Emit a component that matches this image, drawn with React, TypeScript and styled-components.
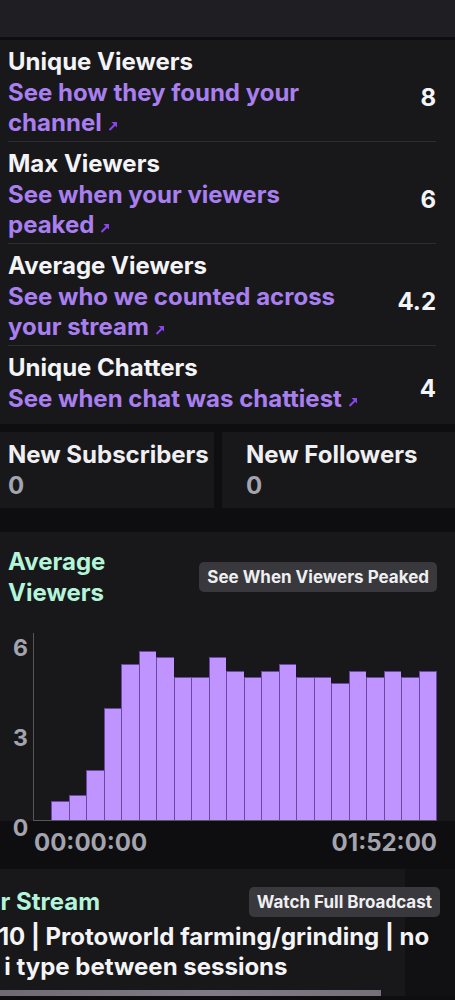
import styled, { createGlobalStyle } from 'styled-components'

const GlobalStyle = createGlobalStyle`
  body {
    margin: 0;
    background: #0e0e10;
    font-family: Inter, Roboto, "Liberation Sans", sans-serif;
    font-weight: 700;
    color: #efeff1;
    overflow-x: hidden;
  }
`

const TopBar = styled.div`
  height: 37px;
  background: #1f1f23;
`

const StatsCard = styled.section`
  margin-top: 3px;
  padding: 0 19px 7px 8px;
  background: #18181b;
`

const StatRow = styled.div`
  display: flex;
  align-items: center;
  padding: 6px 0 3px;

  & + & {
    border-top: 1px solid #2c2c31;
  }
`

const StatText = styled.div`
  flex: 1;
  min-width: 0;
`

const StatTitle = styled.div`
  font-size: 24px;
  line-height: 32px;
  color: #f4f4f6;
`

const StatLink = styled.a`
  display: block;
  font-size: 24px;
  line-height: 30px;
  color: #a97ff0;
  text-decoration: none;
`

const ArrowIcon = styled.svg`
  width: 10px;
  height: 10px;
  margin-left: 6px;
  vertical-align: baseline;
`

const StatValue = styled.div`
  min-width: 60px;
  margin-left: 16px;
  padding-top: 10px;
  text-align: right;
  font-size: 24px;
  color: #f4f4f6;
`

const SubsRow = styled.div`
  display: grid;
  grid-template-columns: 214px 1fr;
  gap: 8px;
  margin-top: 8px;
`

const SubsCard = styled.div<{ $inset: number }>`
  padding: 7px 8px 7px ${(p) => p.$inset}px;
  background: #18181b;
`

const SubsTitle = styled.div`
  font-size: 24px;
  line-height: 32px;
  white-space: nowrap;
`

const SubsValue = styled.div`
  font-size: 24px;
  line-height: 30px;
  color: #a4a4ae;
`

const ChartCard = styled.section`
  margin-top: 24px;
  padding: 14px 18px 0 8px;
  background: #18181b;
`

const CardHeader = styled.div`
  display: flex;
  align-items: center;
  justify-content: space-between;
`

const SectionTitle = styled.h2<{ $narrow?: boolean }>`
  margin: 0;
  max-width: ${(p) => (p.$narrow ? '140px' : 'none')};
  font-size: 24px;
  line-height: 31px;
  color: #b4f5da;
  white-space: ${(p) => (p.$narrow ? 'normal' : 'nowrap')};
`

const PillButton = styled.button`
  flex-shrink: 0;
  height: 30px;
  padding: 0 8px;
  border: none;
  border-radius: 5px;
  background: #38383d;
  color: #efeff1;
  font-family: inherit;
  font-weight: 700;
  font-size: 17px;
`

const PlotRow = styled.div`
  display: flex;
  align-items: flex-start;
  margin-top: 25px;
`

const YAxis = styled.div`
  display: flex;
  flex-direction: column;
  justify-content: space-between;
  width: 25px;
  height: 210px;
  margin-bottom: -23px;
  text-align: center;
  font-size: 23px;
  line-height: 30px;
  color: #a4a4ae;
`

const Bars = styled.div`
  flex: 1;
  display: flex;
  align-items: flex-end;
  height: 187px;
  border-left: 1px solid #55555c;
  border-bottom: 1px solid #55555c;
`

const Bar = styled.div`
  flex: 1;
  box-sizing: border-box;
  background: #bf94ff;
  border: 1px solid #6b47a6;
  border-bottom: none;
  border-right: none;

  &:last-child {
    border-right: 1px solid #6b47a6;
  }
`

const XLabels = styled.div`
  display: flex;
  justify-content: space-between;
  padding: 7px 18px 0 34px;
  font-size: 24px;
  line-height: 30px;
  color: #a4a4ae;
`

const StreamSection = styled.section`
  margin-top: 11px;
  padding-top: 17px;
  overflow: hidden;
  background: linear-gradient(90deg, #18181b 405px, #111113 405px);
`

const StreamInner = styled.div`
  margin-left: -44px;
  padding-right: 15px;
`

const StreamTitle = styled.div`
  max-width: 485px;
  margin-top: 5px;
  font-size: 24px;
  line-height: 30px;
  color: #f4f4f6;
`

const Thumb = styled.div`
  width: 425px;
  height: 6px;
  margin-top: 8px;
  background: linear-gradient(90deg, #6c6670, #807a86 60%, #75707a);
`

function Arrow() {
  return (
    <ArrowIcon viewBox="0 0 10 10">
      <path d="M1.5 9 L7 3.5" stroke="#8b45f0" strokeWidth="2" />
      <polygon points="3.5,1 9,1 9,6.5" fill="#8b45f0" />
    </ArrowIcon>
  )
}

const stats = [
  { title: 'Unique Viewers', link: 'See how they found your channel', value: '8' },
  { title: 'Max Viewers', link: 'See when your viewers peaked', value: '6' },
  { title: 'Average Viewers', link: 'See who we counted across your stream', value: '4.2' },
  { title: 'Unique Chatters', link: 'See when chat was chattiest', value: '4' },
]

const viewers = [
  0, 0.66, 0.87, 1.74, 3.9, 5.42, 5.86, 5.65, 4.98, 4.98, 5.65, 5.19, 4.98, 5.19, 5.42,
  4.98, 4.98, 4.77, 5.19, 4.98, 5.19, 4.98, 5.19,
]

const PLOT_HEIGHT = 187
const PLOT_MAX = 6.5

export default function App() {
  return (
    <>
      <GlobalStyle />
      <TopBar />
      <StatsCard>
        {stats.map((s) => (
          <StatRow key={s.title}>
            <StatText>
              <StatTitle>{s.title}</StatTitle>
              <StatLink href="#">
                {s.link}
                <Arrow />
              </StatLink>
            </StatText>
            <StatValue>{s.value}</StatValue>
          </StatRow>
        ))}
      </StatsCard>

      <SubsRow>
        <SubsCard $inset={8}>
          <SubsTitle>New Subscribers</SubsTitle>
          <SubsValue>0</SubsValue>
        </SubsCard>
        <SubsCard $inset={24}>
          <SubsTitle>New Followers</SubsTitle>
          <SubsValue>0</SubsValue>
        </SubsCard>
      </SubsRow>

      <ChartCard>
        <CardHeader>
          <SectionTitle $narrow>Average Viewers</SectionTitle>
          <PillButton>See When Viewers Peaked</PillButton>
        </CardHeader>
        <PlotRow>
          <YAxis>
            <span>6</span>
            <span>3</span>
            <span>0</span>
          </YAxis>
          <Bars>
            {viewers.map((v, i) => (
              <Bar
                key={i}
                style={{
                  height: (v / PLOT_MAX) * PLOT_HEIGHT,
                  visibility: v > 0 ? 'visible' : 'hidden',
                }}
              />
            ))}
          </Bars>
        </PlotRow>
      </ChartCard>
      <XLabels>
        <span>00:00:00</span>
        <span>01:52:00</span>
      </XLabels>

      <StreamSection>
        <StreamInner>
          <CardHeader>
            <SectionTitle>Your Stream</SectionTitle>
            <PillButton>Watch Full Broadcast</PillButton>
          </CardHeader>
          <StreamTitle>Ep. 10 | Protoworld farming/grinding | no mic i type between sessions</StreamTitle>
          <Thumb />
        </StreamInner>
      </StreamSection>
    </>
  )
}
